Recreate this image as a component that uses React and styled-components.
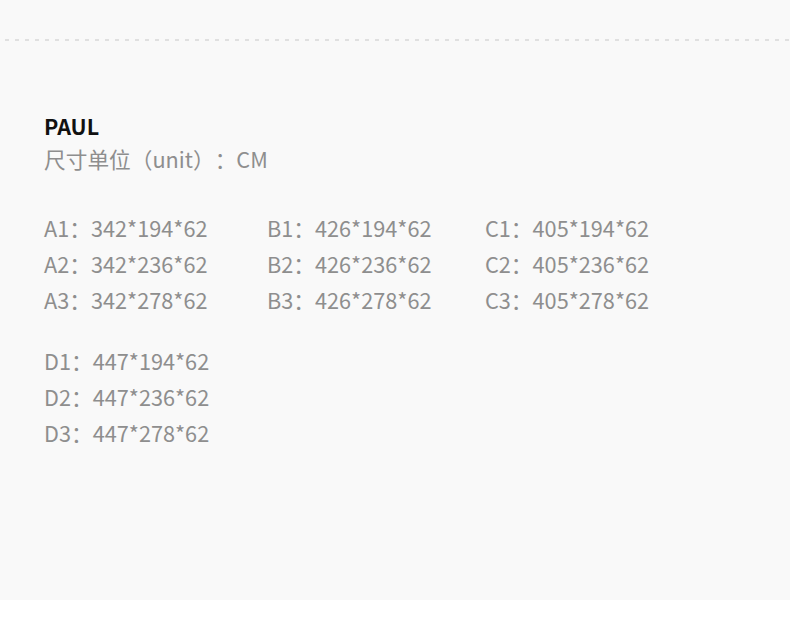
import React from "react";
import styled, { createGlobalStyle } from "styled-components";

const Global = createGlobalStyle`
  html, body { margin: 0; padding: 0; background: #ffffff; }
  body {
    font-family: "Noto Sans CJK SC", "Noto Sans", sans-serif;
    text-spacing-trim: space-all;
  }
`;

const Page = styled.div`
  width: 790px;
  height: 600px;
  background: #f9f9f9;
  box-sizing: border-box;
  padding-top: 39px;
`;

const Divider = styled.div`
  margin-left: 5px;
  height: 2px;
  background-image: repeating-linear-gradient(
    to right,
    #e0e0e0 0,
    #e0e0e0 4px,
    transparent 4px,
    transparent 10px
  );
`;

const Content = styled.div`
  padding: 69px 0 0 44px;
  display: flex;
  flex-direction: column;
`;

const Title = styled.div`
  font-size: 21.5px;
  font-weight: 700;
  color: #111;
  line-height: 32px;
`;

const Subtitle = styled.div`
  font-size: 21.7px;
  font-weight: 400;
  color: #8e8e8e;
  line-height: 34px;
  word-spacing: 2px;
`;

const Grid = styled.div`
  display: grid;
  grid-template-columns: ${(p) => p.$cols};
  margin-top: ${(p) => p.$top}px;
`;

const Cell = styled.div`
  font-size: 21.7px;
  font-weight: 400;
  color: #8e8e8e;
  line-height: 36px;
  white-space: nowrap;
`;

const groupOne = [
  ["A1：342*194*62", "B1：426*194*62", "C1：405*194*62"],
  ["A2：342*236*62", "B2：426*236*62", "C2：405*236*62"],
  ["A3：342*278*62", "B3：426*278*62", "C3：405*278*62"],
];

const groupTwo = [["D1：447*194*62"], ["D2：447*236*62"], ["D3：447*278*62"]];

export default function App() {
  return (
    <>
      <Global />
      <Page>
        <Divider />
        <Content>
          <Title>PAUL</Title>
          <Subtitle>尺寸单位（unit）：CM</Subtitle>
          <Grid $cols="223px 218px auto" $top={34}>
            {groupOne.flat().map((t) => (
              <Cell key={t}>{t}</Cell>
            ))}
          </Grid>
          <Grid $cols="auto" $top={25}>
            {groupTwo.flat().map((t) => (
              <Cell key={t}>{t}</Cell>
            ))}
          </Grid>
        </Content>
      </Page>
    </>
  );
}
